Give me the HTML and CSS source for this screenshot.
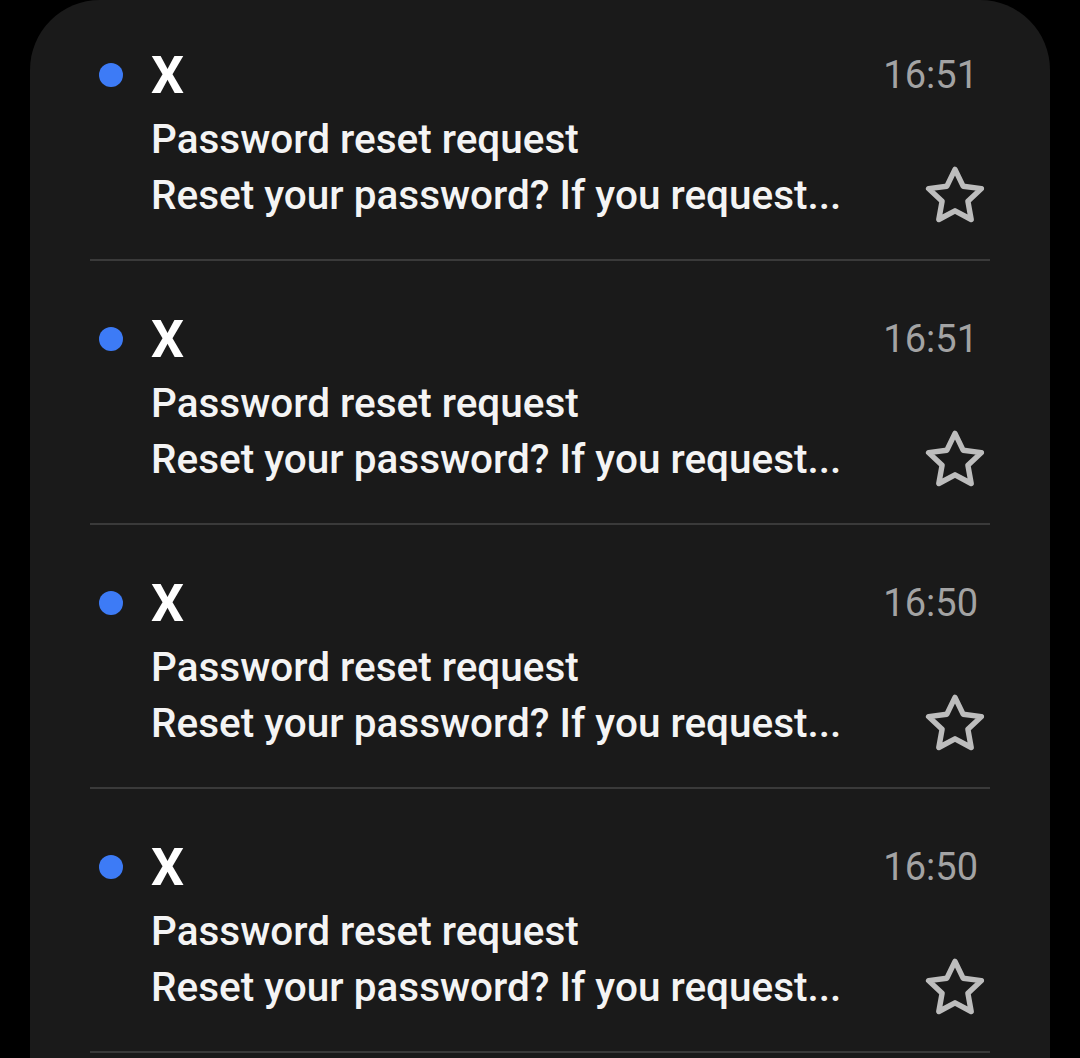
FILE: index.html
```html
<!DOCTYPE html>
<html lang="en">
<head>
  <meta charset="UTF-8"/>
  <meta name="viewport" content="width=device-width, initial-scale=1.0"/>
  <title>Inbox</title>
  <link rel="stylesheet" href="styles.css">
</head>
<body>
  <div class="card">
    <div class="mail">
      <div class="head">
        <span class="dot"></span>
        <span class="sender">X</span>
        <span class="time">16:51</span>
      </div>
      <div class="subject">Password reset request</div>
      <div class="preview">
        <span class="text">Reset your password? If you request...</span>
        <svg class="star" viewBox="0 0 24 24"><path d="M12 2.8l2.7 5.6 6.1.8-4.5 4.2 1.1 6.1L12 16.6l-5.4 2.9 1.1-6.1-4.5-4.2 6.1-.8z"/></svg>
      </div>
    </div>
    <div class="mail">
      <div class="head">
        <span class="dot"></span>
        <span class="sender">X</span>
        <span class="time">16:51</span>
      </div>
      <div class="subject">Password reset request</div>
      <div class="preview">
        <span class="text">Reset your password? If you request...</span>
        <svg class="star" viewBox="0 0 24 24"><path d="M12 2.8l2.7 5.6 6.1.8-4.5 4.2 1.1 6.1L12 16.6l-5.4 2.9 1.1-6.1-4.5-4.2 6.1-.8z"/></svg>
      </div>
    </div>
    <div class="mail">
      <div class="head">
        <span class="dot"></span>
        <span class="sender">X</span>
        <span class="time">16:50</span>
      </div>
      <div class="subject">Password reset request</div>
      <div class="preview">
        <span class="text">Reset your password? If you request...</span>
        <svg class="star" viewBox="0 0 24 24"><path d="M12 2.8l2.7 5.6 6.1.8-4.5 4.2 1.1 6.1L12 16.6l-5.4 2.9 1.1-6.1-4.5-4.2 6.1-.8z"/></svg>
      </div>
    </div>
    <div class="mail">
      <div class="head">
        <span class="dot"></span>
        <span class="sender">X</span>
        <span class="time">16:50</span>
      </div>
      <div class="subject">Password reset request</div>
      <div class="preview">
        <span class="text">Reset your password? If you request...</span>
        <svg class="star" viewBox="0 0 24 24"><path d="M12 2.8l2.7 5.6 6.1.8-4.5 4.2 1.1 6.1L12 16.6l-5.4 2.9 1.1-6.1-4.5-4.2 6.1-.8z"/></svg>
      </div>
    </div>
  </div>
</body>
</html>
```

FILE: styles.css
```css
body {
  margin:0; padding:0;
  background:#000;
  font-family:Roboto,'Noto Sans',sans-serif;
  height:1058px; overflow:hidden;
}

/* Card */
.card {
  margin-left:30px; width:1020px;
  background:#1a1a1a;
  border-radius:70px 70px 0 0;
  padding:0 60px;
  box-sizing:border-box;
  min-height:1058px;
}

.mail {
  padding:45px 0 36px;
  border-bottom:2px solid #3a3a3a;
}
.mail + .mail { padding-top:48px; }

.head {
  display:flex; align-items:center;
  height:60px;
}
.dot {
  width:24px; height:24px; border-radius:50%;
  background:#3d7bf6;
  margin-left:9px; margin-right:28px;
}
.sender {
  color:#fff; font-size:52px; font-weight:700;
}
.time {
  margin-left:auto; margin-right:12px;
  color:#a3a3a3; font-size:38px;
}

.subject, .preview .text {
  color:#f4f4f4; font-size:40.5px; font-weight:500;
  margin-left:61px;
}
.subject { height:56px; line-height:56px; margin-top:6px; }
.preview {
  display:flex; align-items:center;
  height:56px;
}
.preview .text { line-height:56px; }
.star {
  width:72px; height:72px;
  margin-left:auto; margin-right:-1px; margin-top:4px;
  fill:none; stroke:#bdbdbd; stroke-width:1.8; stroke-linejoin:round;
}
```
